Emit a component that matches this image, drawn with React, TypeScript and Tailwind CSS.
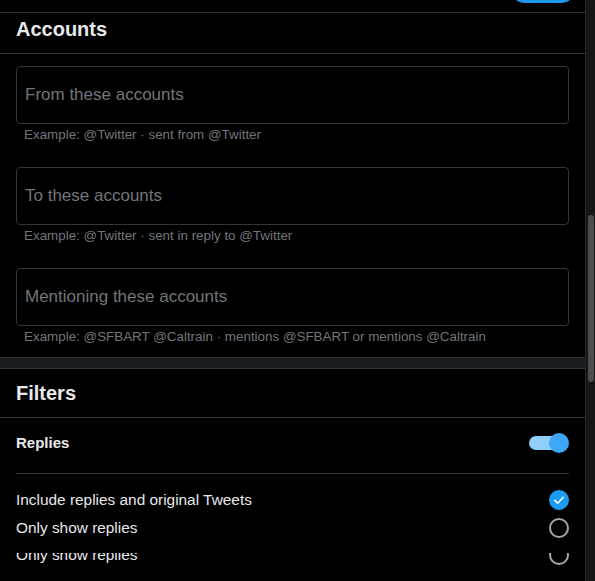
const ACCOUNT_FIELDS = [
	{ placeholder: 'From these accounts', hint: 'Example: @Twitter · sent from @Twitter' },
	{ placeholder: 'To these accounts', hint: 'Example: @Twitter · sent in reply to @Twitter' },
	{ placeholder: 'Mentioning these accounts', hint: 'Example: @SFBART @Caltrain · mentions @SFBART or mentions @Caltrain' },
];

const CheckedCircle = () => (
	<svg width="20" height="20" viewBox="0 0 20 20">
		<circle cx="10" cy="10" r="10" fill="#1d9bf0" />
		<path d="M5.8 10.4l2.9 2.9 5.6-6" fill="none" stroke="#fff" strokeWidth="1.6" strokeLinecap="round" strokeLinejoin="round" />
	</svg>
);

const EmptyCircle = () => <div className="size-5 rounded-full border-2 border-[#a3a7ab]" />;

const OptionRow = ({ label, checked }: { label: string; checked?: boolean }) => (
	<div className="flex h-[28px] shrink-0 items-center justify-between text-[15.4px] text-[#e7e9ea]">
		<span>{label}</span>
		{checked ? <CheckedCircle /> : <EmptyCircle />}
	</div>
);

const App = () => {
	return (
		<div className="flex h-[581px] w-[595px] overflow-hidden bg-black font-['Liberation_Sans',Arial,sans-serif]">
			<div className="min-w-0 flex-1">
				{/* top bar, mostly scrolled out */}
				<div className="flex h-[13px] items-end justify-end overflow-hidden border-b border-[#2f3336]">
					<button className="mb-[9px] mr-[7px] h-9 w-[70px] shrink-0 rounded-full bg-[#1d9bf0]" />
				</div>

				{/* Accounts */}
				<div className="border-b border-[#2f3336] px-4 pt-[4px] pb-[12px] text-[20px] font-bold leading-[24px] text-[#e7e9ea]">
					Accounts
				</div>
				<div className="px-4 pt-[12px] pb-[12px]">
					{ACCOUNT_FIELDS.map((f, i) => (
						<div key={f.placeholder} className={i < ACCOUNT_FIELDS.length - 1 ? 'mb-[24px]' : ''}>
							<div className="h-[58px] rounded-[4px] border border-[#333639] px-2">
								<input
									type="text"
									placeholder={f.placeholder}
									className="h-full w-full bg-transparent text-[17px] text-[#e7e9ea] outline-none placeholder:text-[#71767b]"
								/>
							</div>
							<div className="mt-[3px] px-2 text-[13.4px] leading-4 text-[#71767b]">{f.hint}</div>
						</div>
					))}
				</div>

				<div className="h-[12px] border-y border-[#2f3336] bg-[#1b1e21]" />

				{/* Filters */}
				<div className="border-b border-[#2f3336] px-4 pt-[12px] pb-[12px] text-[20px] font-bold leading-[24px] text-[#e7e9ea]">
					Filters
				</div>
				<div className="px-4">
					<div className="flex h-[50px] items-center justify-between">
						<span className="text-[15px] font-bold text-[#e7e9ea]">Replies</span>
						<div className="relative flex h-5 w-10 items-center">
							<div className="h-[14px] w-[36px] rounded-full bg-[#8fd0fb]" />
							<div className="absolute right-0 top-0 size-5 rounded-full bg-[#3ea6f5]" />
						</div>
					</div>
					<div className="mt-[5px] h-px bg-[#2f3336]" />
					<div className="pt-[12px]">
						<OptionRow label="Include replies and original Tweets" checked />
						<OptionRow label="Only show replies" />
						{/* next row is half hidden under the list edge */}
						<div className="mt-[11px] flex h-[16px] flex-col justify-end overflow-hidden">
							<OptionRow label="Only show replies" />
						</div>
					</div>
				</div>
			</div>

			{/* scrollbar */}
			<div className="flex w-[10px] justify-center border-l border-[#242424] bg-[#161616]">
				<div className="mt-[215px] h-[167px] w-[6px] rounded-full bg-[#4d4d4d]" />
			</div>
		</div>
	);
};

export default App;
